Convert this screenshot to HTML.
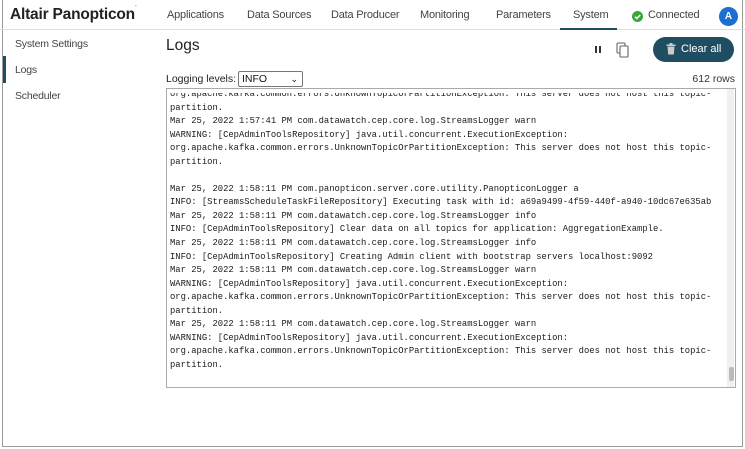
<!DOCTYPE html>
<html><head><meta charset="utf-8"><style>
*{margin:0;padding:0;box-sizing:border-box}
body{width:745px;height:449px;background:#fff;font-family:"Liberation Sans",sans-serif;position:relative;overflow:hidden;color:#333}
.frame{position:absolute;left:2px;top:0;width:741px;height:447px;border:1px solid #9a9a9a;border-top:none}
.hdr{position:absolute;left:0;top:0;width:745px;height:30px;border-bottom:1px solid #ddd}
.logo{position:absolute;left:10px;top:6px;font-size:15.5px;font-weight:bold;color:#222;letter-spacing:-0.2px}
.nav{position:absolute;top:9px;font-size:11px;color:#444;letter-spacing:-0.2px}
.ul{position:absolute;left:560px;top:28px;width:57px;height:2px;background:#1f4e63}
.side{position:absolute;left:15px;font-size:10.5px;color:#444;letter-spacing:-0.2px}
.bar{position:absolute;left:3px;top:56px;width:3px;height:27px;background:#1f4e63}
h1{position:absolute;left:166px;top:37px;font-size:15.5px;font-weight:normal;color:#222}
.btn{position:absolute;left:653px;top:37px;width:81px;height:25px;border-radius:13px;background:#1f4e63;color:#fff;font-size:11px;line-height:25px;padding-left:28px}
.log{position:absolute;left:166px;top:88px;width:570px;height:300px;border:1px solid #aaa;overflow:hidden}
.log pre{font-family:"Liberation Mono",monospace;font-size:8.85px;line-height:13.55px;color:#1a1a1a;position:absolute;left:3px;top:-1px;white-space:pre}
.cover{position:absolute;left:0;top:0;width:100%;height:4px;background:#fff}
.sb{position:absolute;right:1px;top:0;width:7px;height:298px;background:#f0f0f0}
.thumb{position:absolute;right:1px;top:278px;width:5px;height:14px;background:#bbb;border-radius:2px}
</style></head><body>
<div class="frame"></div>
<div class="hdr"></div>
<div class="logo">Altair Panopticon<span style="font-size:6px;vertical-align:top">˙</span></div>
<div class="nav" style="left:167px">Applications</div>
<div class="nav" style="left:247px">Data Sources</div>
<div class="nav" style="left:331px">Data Producer</div>
<div class="nav" style="left:420px">Monitoring</div>
<div class="nav" style="left:496px">Parameters</div>
<div class="nav" style="left:573px">System</div>
<div class="ul"></div>
<svg style="position:absolute;left:632px;top:11px" width="11" height="11"><circle cx="5.5" cy="5.5" r="5.5" fill="#3aa63a"/><path d="M3 5.7l1.8 1.8L8.2 4" stroke="#fff" stroke-width="1.5" fill="none"/></svg>
<div class="nav" style="left:648px">Connected</div>
<div style="position:absolute;left:719px;top:7px;width:19px;height:19px;border-radius:50%;background:#1b6fd1;color:#fff;font-size:10px;font-weight:bold;text-align:center;line-height:19px">A</div>
<div class="bar"></div>
<div class="side" style="top:38px">System Settings</div>
<div class="side" style="top:64px">Logs</div>
<div class="side" style="top:90px">Scheduler</div>
<h1>Logs</h1>
<svg style="position:absolute;left:594px;top:45px" width="8" height="9"><rect x="1" y="1" width="2" height="7" fill="#333"/><rect x="5" y="1" width="2" height="7" fill="#333"/></svg>
<svg style="position:absolute;left:616px;top:42px" width="14" height="16"><rect x="1" y="1" width="8" height="10" rx="1" fill="none" stroke="#666" stroke-width="1.1"/><rect x="4" y="4" width="8" height="11" rx="1" fill="#fff" stroke="#666" stroke-width="1.1"/></svg>
<div class="btn">Clear all</div>
<svg style="position:absolute;left:666px;top:43px" width="10" height="12"><rect x="0.5" y="1.5" width="9" height="1.5" fill="#ccc"/><rect x="3.5" y="0" width="3" height="2" fill="#ccc"/><path d="M1.5 3.5h7l-0.7 8h-5.6z" fill="#ccc"/></svg>
<div style="position:absolute;left:166px;top:73px;font-size:10.5px;color:#222">Logging levels:</div>
<div style="position:absolute;left:238px;top:71px;width:65px;height:16px;border:1px solid #777;border-radius:2px;font-size:10.5px;padding-left:3px;line-height:14px;color:#111">INFO<span style="position:absolute;right:4px;top:0;font-size:9px">&#8964;</span></div>
<div style="position:absolute;right:10px;top:73px;font-size:10.5px;color:#333">612 rows</div>
<div class="log"><pre>org.apache.kafka.common.errors.UnknownTopicOrPartitionException: This server does not host this topic-
partition.
Mar 25, 2022 1:57:41 PM com.datawatch.cep.core.log.StreamsLogger warn
WARNING: [CepAdminToolsRepository] java.util.concurrent.ExecutionException:
org.apache.kafka.common.errors.UnknownTopicOrPartitionException: This server does not host this topic-
partition.

Mar 25, 2022 1:58:11 PM com.panopticon.server.core.utility.PanopticonLogger a
INFO: [StreamsScheduleTaskFileRepository] Executing task with id: a69a9499-4f59-440f-a940-10dc67e635ab
Mar 25, 2022 1:58:11 PM com.datawatch.cep.core.log.StreamsLogger info
INFO: [CepAdminToolsRepository] Clear data on all topics for application: AggregationExample.
Mar 25, 2022 1:58:11 PM com.datawatch.cep.core.log.StreamsLogger info
INFO: [CepAdminToolsRepository] Creating Admin client with bootstrap servers localhost:9092
Mar 25, 2022 1:58:11 PM com.datawatch.cep.core.log.StreamsLogger warn
WARNING: [CepAdminToolsRepository] java.util.concurrent.ExecutionException:
org.apache.kafka.common.errors.UnknownTopicOrPartitionException: This server does not host this topic-
partition.
Mar 25, 2022 1:58:11 PM com.datawatch.cep.core.log.StreamsLogger warn
WARNING: [CepAdminToolsRepository] java.util.concurrent.ExecutionException:
org.apache.kafka.common.errors.UnknownTopicOrPartitionException: This server does not host this topic-
partition.</pre><div class="cover"></div><div class="sb"></div><div class="thumb"></div></div>
</body></html>
